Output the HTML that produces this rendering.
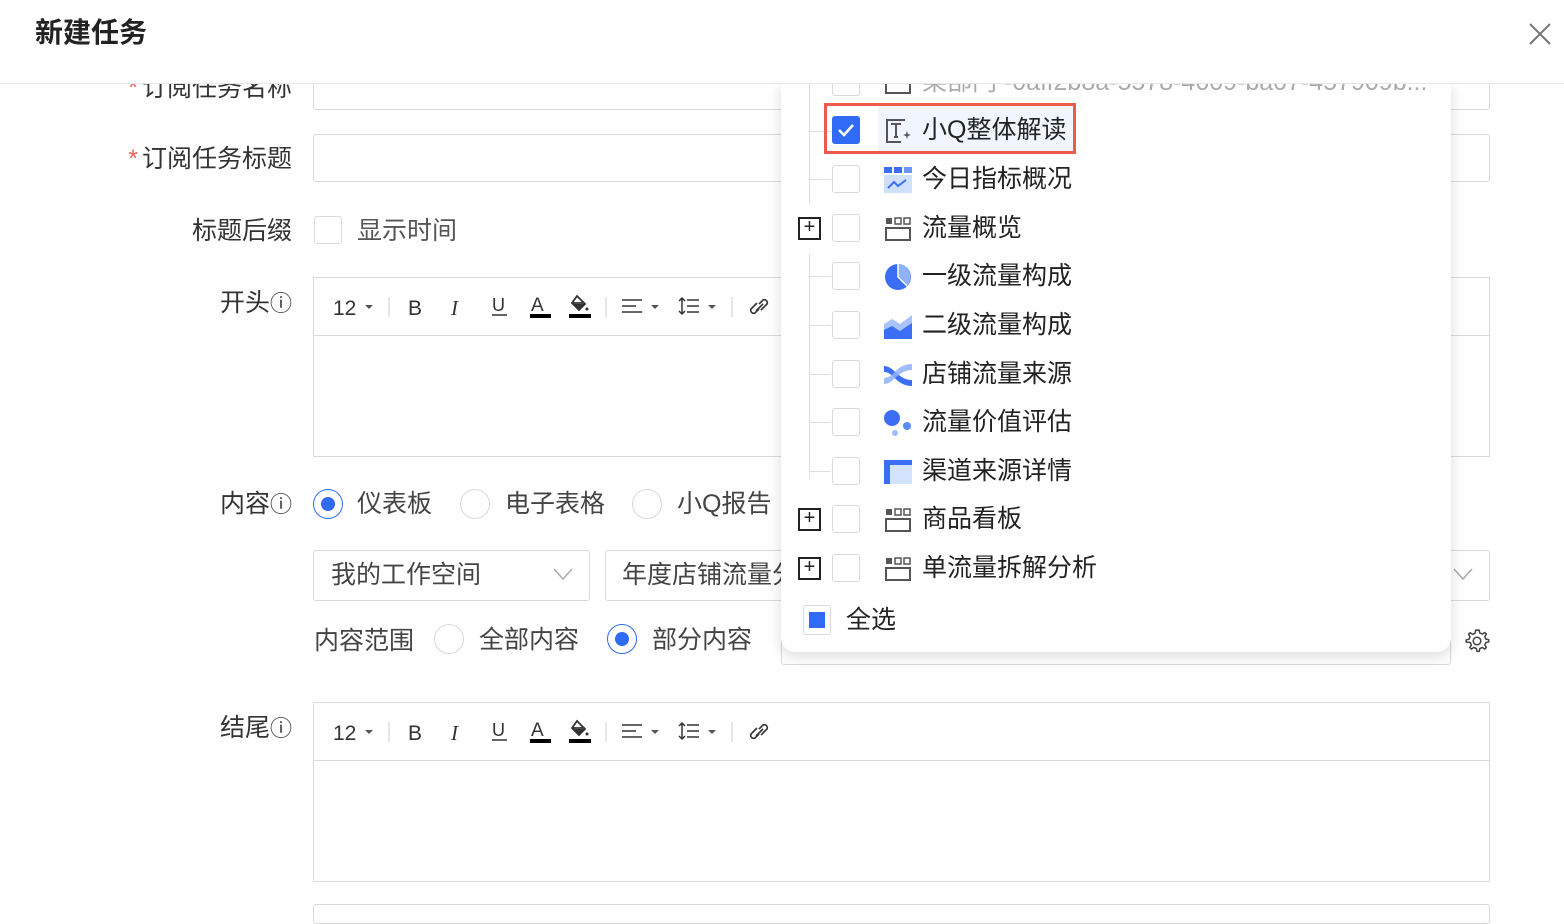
<!DOCTYPE html>
<html><head><meta charset="utf-8">
<style>
*{box-sizing:border-box;margin:0;padding:0}
body{width:1564px;height:912px;overflow:hidden;background:#fff;font-family:"Liberation Sans","Noto Sans CJK SC",sans-serif;color:#333;position:relative}
.abs{position:absolute}
.lbl{position:absolute;font-size:25px;color:#333;text-align:right;width:292px;left:0;line-height:30px}
.inp{position:absolute;border:1px solid #d9d9d9;border-radius:3px;background:#fff}
.star{color:#f5605a;margin-right:4px}
.cb{position:absolute;width:28px;height:28px;border:1px solid #d9d9d9;border-radius:3px;background:#fff}
.radio{position:absolute;width:30px;height:30px;border:1px solid #d9d9d9;border-radius:50%;background:#fff}
.radio.on{border-color:#2f6bf5}
.radio.on:after{content:"";position:absolute;left:7px;top:7px;width:14px;height:14px;border-radius:50%;background:#2f6bf5}
.t{position:absolute;font-size:25px;line-height:30px;white-space:nowrap}
.tb{position:absolute;left:313px;width:1177px;height:180px;border:1px solid #d9d9d9}
.tb .bar{height:58px;border-bottom:1px solid #d9d9d9;position:relative}
.tb svg{position:absolute;left:0;top:0}
.panel{position:absolute;left:781px;top:84px;width:670px;height:568px;background:#fff;border-radius:0 0 14px 14px;box-shadow:0 4px 14px rgba(0,0,0,.15);overflow:hidden}
.row{position:absolute;left:0;height:40px;width:670px}
.row .cb{left:51px;top:6px}
.row .ic{position:absolute;left:103px;top:7px;width:28px;height:28px}
.row .tx{position:absolute;left:141px;top:5px;font-size:25px;line-height:30px;color:#222;white-space:nowrap}
.plus{position:absolute;left:17px;top:9px;width:23px;height:23px;border:2px solid #222;font-size:20px;line-height:17px;text-align:center;color:#222}
.vl{position:absolute;left:28px;width:1px;background:#ddd}
.hl{position:absolute;left:28px;width:22px;height:1px;background:#ddd}
</style></head><body>

<div class="abs" style="left:0;top:0;width:1564px;height:84px;border-bottom:1px solid #e8e8e8;background:#fff;z-index:5"></div>
<div class="abs" style="left:35px;top:16px;font-size:28px;font-weight:bold;color:#222;z-index:6;line-height:34px">新建任务</div>
<svg class="abs" style="left:1528px;top:22px;z-index:6" width="24" height="24" viewBox="0 0 24 24"><path d="M2 2L22 22M22 2L2 22" stroke="#777" stroke-width="2"/></svg>

<div class="lbl" style="top:73px"><span class="star">*</span>订阅任务名称</div>
<div class="inp" style="left:313px;top:60px;width:1177px;height:50px"></div>
<div class="lbl" style="top:144px"><span class="star">*</span>订阅任务标题</div>
<div class="inp" style="left:313px;top:134px;width:1177px;height:48px"></div>
<div class="lbl" style="top:216px">标题后缀</div>
<div class="cb" style="left:314px;top:216px"></div>
<div class="t" style="left:357px;top:216px;color:#555">显示时间</div>

<div class="lbl" style="top:288px">开头<span style="font-size:22px">ⓘ</span></div>
<div class="tb" style="top:277px"><div class="bar">
<svg width="480" height="58" viewBox="0 0 480 58">
<g transform="translate(-313,-277)">
<text x="332" y="314" font-size="21" fill="#333" font-family="Liberation Sans">12</text>
<path d="M364 304h8l-4 4z" fill="#555"/>
<line x1="388" y1="296" x2="388" y2="316" stroke="#ccc"/>
<text x="407" y="314" font-size="21" fill="#333" font-family="Liberation Sans">B</text>
<text x="450" y="314" font-size="21" fill="#333" font-family="Liberation Serif" font-style="italic">I</text>
<text x="491" y="310" font-size="18" fill="#333" font-family="Liberation Sans">U</text><line x1="491" y1="314" x2="506" y2="314" stroke="#333" stroke-width="1.5"/>
<text x="530" y="310" font-size="19" fill="#333" font-family="Liberation Sans">A</text><rect x="529" y="313" width="21" height="4" fill="#000"/>
<path d="M576 295l8 8-6 6-7-7z M571 302h13" fill="none" stroke="#333" stroke-width="1.8"/><path d="M572 303h12l-6 6z" fill="#333"/><circle cx="586" cy="308" r="1.5" fill="#333"/><rect x="568" y="313" width="22" height="4" fill="#000"/>
<line x1="605" y1="296" x2="605" y2="316" stroke="#ccc"/>
<path d="M621 299h20M621 305h14M621 311h20" stroke="#333" stroke-width="1.5"/><path d="M650 304h8l-4 4z" fill="#555"/>
<path d="M681 297v16M678 300l3-3 3 3M678 310l3 3 3-3M686 299h12M686 305h12M686 311h12" stroke="#333" stroke-width="1.5" fill="none"/><path d="M707 304h8l-4 4z" fill="#555"/>
<line x1="731" y1="296" x2="731" y2="316" stroke="#ccc"/>
<path d="M756 302l-6 6a3 3 0 0 0 4 4l4-4M760 309l6-6a3 3 0 0 0-4-4l-4 4M755 310l7-7" stroke="#333" stroke-width="1.6" fill="none"/>
</g></svg>
</div></div>

<div class="lbl" style="top:489px">内容<span style="font-size:22px">ⓘ</span></div>
<div class="radio on" style="left:313px;top:489px"></div><div class="t" style="left:357px;top:489px;color:#444">仪表板</div>
<div class="radio" style="left:460px;top:489px"></div><div class="t" style="left:505px;top:489px;color:#444">电子表格</div>
<div class="radio" style="left:632px;top:489px"></div><div class="t" style="left:677px;top:489px;color:#444">小Q报告</div>

<div class="inp" style="left:313px;top:550px;width:277px;height:51px"></div>
<div class="t" style="left:331px;top:560px;color:#444">我的工作空间</div>
<svg class="abs" style="left:552px;top:566px" width="22" height="16"><path d="M2 3L11 13L20 3" stroke="#aaa" fill="none" stroke-width="1.5"/></svg>
<div class="inp" style="left:605px;top:550px;width:885px;height:51px"></div>
<div class="t" style="left:622px;top:560px;color:#444">年度店铺流量分析</div>
<svg class="abs" style="left:1452px;top:566px" width="22" height="16"><path d="M2 3L11 13L20 3" stroke="#aaa" fill="none" stroke-width="1.5"/></svg>

<div class="t" style="left:314px;top:626px;color:#444">内容范围</div>
<div class="radio" style="left:434px;top:624px"></div><div class="t" style="left:479px;top:625px;color:#444">全部内容</div>
<div class="radio on" style="left:607px;top:624px"></div><div class="t" style="left:652px;top:625px;color:#444">部分内容</div>
<div class="inp" style="left:781px;top:612px;width:670px;height:53px"></div>
<svg class="abs" style="left:1464px;top:628px" width="26" height="26" viewBox="0 0 24 24"><path d="M12 2l2 0 .6 2.6 2.3 1 2.3-1.4 1.4 1.4-1.4 2.3 1 2.3 2.6.6v2l-2.6.6-1 2.3 1.4 2.3-1.4 1.4-2.3-1.4-2.3 1-.6 2.6h-2l-.6-2.6-2.3-1-2.3 1.4-1.4-1.4 1.4-2.3-1-2.3L2 13v-2l2.6-.6 1-2.3L4.2 5.8l1.4-1.4 2.3 1.4 2.3-1L10.8 2z" fill="none" stroke="#444" stroke-width="1.4"/><circle cx="12" cy="12" r="3.5" fill="none" stroke="#444" stroke-width="1.4"/></svg>

<div class="lbl" style="top:713px">结尾<span style="font-size:22px">ⓘ</span></div>
<div class="tb" style="top:702px"><div class="bar">
<svg width="480" height="58" viewBox="0 0 480 58">
<g transform="translate(-313,-277)">
<text x="332" y="314" font-size="21" fill="#333" font-family="Liberation Sans">12</text>
<path d="M364 304h8l-4 4z" fill="#555"/>
<line x1="388" y1="296" x2="388" y2="316" stroke="#ccc"/>
<text x="407" y="314" font-size="21" fill="#333" font-family="Liberation Sans">B</text>
<text x="450" y="314" font-size="21" fill="#333" font-family="Liberation Serif" font-style="italic">I</text>
<text x="491" y="310" font-size="18" fill="#333" font-family="Liberation Sans">U</text><line x1="491" y1="314" x2="506" y2="314" stroke="#333" stroke-width="1.5"/>
<text x="530" y="310" font-size="19" fill="#333" font-family="Liberation Sans">A</text><rect x="529" y="313" width="21" height="4" fill="#000"/>
<path d="M576 295l8 8-6 6-7-7z M571 302h13" fill="none" stroke="#333" stroke-width="1.8"/><path d="M572 303h12l-6 6z" fill="#333"/><circle cx="586" cy="308" r="1.5" fill="#333"/><rect x="568" y="313" width="22" height="4" fill="#000"/>
<line x1="605" y1="296" x2="605" y2="316" stroke="#ccc"/>
<path d="M621 299h20M621 305h14M621 311h20" stroke="#333" stroke-width="1.5"/><path d="M650 304h8l-4 4z" fill="#555"/>
<path d="M681 297v16M678 300l3-3 3 3M678 310l3 3 3-3M686 299h12M686 305h12M686 311h12" stroke="#333" stroke-width="1.5" fill="none"/><path d="M707 304h8l-4 4z" fill="#555"/>
<line x1="731" y1="296" x2="731" y2="316" stroke="#ccc"/>
<path d="M756 302l-6 6a3 3 0 0 0 4 4l4-4M760 309l6-6a3 3 0 0 0-4-4l-4 4M755 310l7-7" stroke="#333" stroke-width="1.6" fill="none"/>
</g></svg>
</div></div>
<div class="inp" style="left:313px;top:904px;width:1177px;height:20px"></div>

<div class="panel">
<div class="vl" style="top:0;height:120px"></div>
<div class="vl" style="top:170px;height:225px"></div>
<div class="hl" style="top:47px"></div><div class="hl" style="top:95px"></div>
<div class="hl" style="top:192px"></div><div class="hl" style="top:241px"></div><div class="hl" style="top:290px"></div><div class="hl" style="top:338px"></div><div class="hl" style="top:387px"></div>

<div class="row" style="top:-22px"><div class="cb"></div><svg class="ic" viewBox="0 0 28 28"><rect x="2" y="6" width="24" height="18" fill="none" stroke="#555" stroke-width="2"/></svg><div class="tx" style="color:#aaa">某部门 -0aff2b8a-5578-4609-ba07-457909b...</div></div>

<div class="abs" style="left:43px;top:19px;width:252px;height:51px;border:3px solid #ee5a4c"></div>
<div class="abs" style="left:97px;top:22px;width:195px;height:45px;background:#f0f5ff"></div>
<div class="row" style="top:26px"><div class="cb" style="background:#2f6bf5;border-color:#2f6bf5"><svg width="26" height="26" viewBox="0 0 26 26"><path d="M6 13l5 5 9-10" stroke="#fff" stroke-width="2.6" fill="none"/></svg></div>
<svg class="ic" viewBox="0 0 28 28"><path d="M21 3H3v22h14" fill="none" stroke="#555" stroke-width="2"/><path d="M7 7h10M12 7v13M10 20h4" stroke="#555" stroke-width="2"/><path d="M23 14l1 3 3 1-3 1-1 3-1-3-3-1 3-1z" fill="#555"/></svg><div class="tx">小Q整体解读</div></div>

<div class="row" style="top:75px"><div class="cb"></div><svg class="ic" viewBox="0 0 28 28"><rect x="0" y="1" width="8" height="6" fill="#3b6ef5"/><rect x="10" y="1" width="8" height="6" fill="#3b6ef5"/><rect x="20" y="1" width="8" height="6" fill="#6e96f7"/><rect x="0" y="9" width="28" height="18" fill="#cfe0fd"/><path d="M4 22l6-6 4 4 8-6" stroke="#3b6ef5" stroke-width="2" fill="none"/></svg><div class="tx">今日指标概况</div></div>

<div class="row" style="top:124px"><div class="plus">+</div><div class="cb"></div><svg class="ic" viewBox="0 0 28 28"><rect x="2" y="3" width="6" height="6" fill="#555"/><rect x="11" y="3" width="6" height="6" fill="none" stroke="#555" stroke-width="1.5"/><rect x="20" y="3" width="6" height="6" fill="none" stroke="#555" stroke-width="1.5"/><rect x="2" y="13" width="24" height="12" fill="none" stroke="#555" stroke-width="2"/></svg><div class="tx">流量概览</div></div>

<div class="row" style="top:172px"><div class="cb"></div><svg class="ic" viewBox="0 0 28 28"><circle cx="14" cy="14" r="13" fill="#3b6ef5"/><path d="M14 1v13l9 9A13 13 0 0 0 14 1z" fill="#8fb2fa"/><path d="M14 1v13l9 9" stroke="#fff" stroke-width="1.5" fill="none"/></svg><div class="tx">一级流量构成</div></div>

<div class="row" style="top:221px"><div class="cb"></div><svg class="ic" viewBox="0 0 28 28"><path d="M0 12l8-5 8 5 12-9v24H0z" fill="#a9c4fb"/><path d="M0 18l8-4 8 5 12-8v16H0z" fill="#3b6ef5"/></svg><div class="tx">二级流量构成</div></div>

<div class="row" style="top:270px"><div class="cb"></div><svg class="ic" viewBox="0 0 28 28"><path d="M0 5c10 0 14 14 28 14v6C12 25 10 11 0 11z" fill="#3b6ef5"/><path d="M0 23c10 0 14-14 28-14V3C12 3 10 17 0 17z" fill="#8fb2fa" opacity=".85"/></svg><div class="tx">店铺流量来源</div></div>

<div class="row" style="top:318px"><div class="cb"></div><svg class="ic" viewBox="0 0 28 28"><circle cx="8" cy="9" r="8" fill="#3b6ef5"/><circle cx="23" cy="17" r="4" fill="#5b8cf7"/><circle cx="11" cy="24" r="3" fill="#9dbdfb"/></svg><div class="tx">流量价值评估</div></div>

<div class="row" style="top:367px"><div class="cb"></div><svg class="ic" viewBox="0 0 28 28"><rect x="0" y="2" width="28" height="24" fill="#d4e3fd"/><rect x="0" y="2" width="28" height="5" fill="#3b6ef5"/><rect x="0" y="2" width="6" height="24" fill="#3b6ef5"/></svg><div class="tx">渠道来源详情</div></div>

<div class="row" style="top:415px"><div class="plus">+</div><div class="cb"></div><svg class="ic" viewBox="0 0 28 28"><rect x="2" y="3" width="6" height="6" fill="#555"/><rect x="11" y="3" width="6" height="6" fill="none" stroke="#555" stroke-width="1.5"/><rect x="20" y="3" width="6" height="6" fill="none" stroke="#555" stroke-width="1.5"/><rect x="2" y="13" width="24" height="12" fill="none" stroke="#555" stroke-width="2"/></svg><div class="tx">商品看板</div></div>

<div class="row" style="top:464px"><div class="plus">+</div><div class="cb"></div><svg class="ic" viewBox="0 0 28 28"><rect x="2" y="3" width="6" height="6" fill="#555"/><rect x="11" y="3" width="6" height="6" fill="none" stroke="#555" stroke-width="1.5"/><rect x="20" y="3" width="6" height="6" fill="none" stroke="#555" stroke-width="1.5"/><rect x="2" y="13" width="24" height="12" fill="none" stroke="#555" stroke-width="2"/></svg><div class="tx">单流量拆解分析</div></div>

<div class="cb" style="left:22px;top:521px;width:28px;height:30px"><div style="position:absolute;left:5px;top:6px;width:16px;height:16px;background:#2f6bf5"></div></div>
<div class="abs" style="left:65px;top:521px;font-size:25px;line-height:30px;color:#222">全选</div>
</div>
</body></html>
